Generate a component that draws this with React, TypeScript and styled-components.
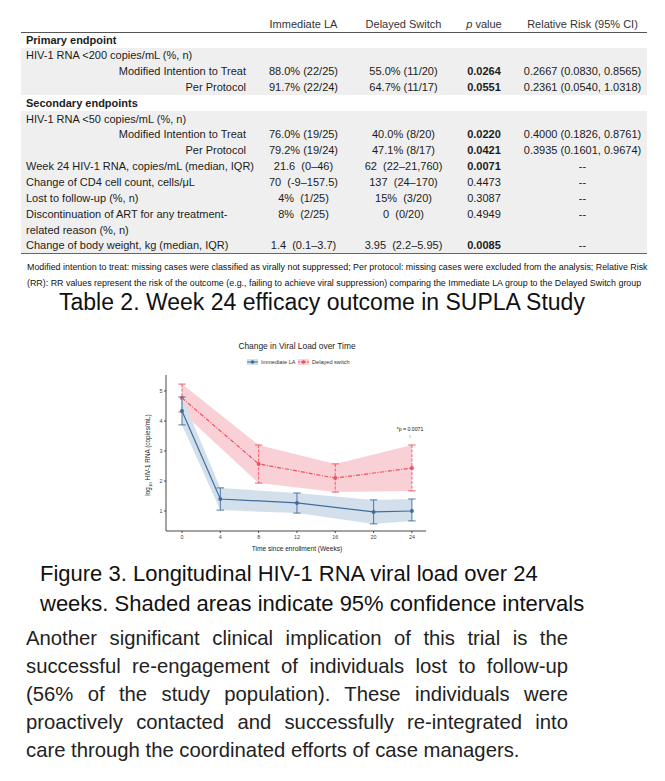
import React from 'react';
import styled, { createGlobalStyle } from 'styled-components';

const GlobalStyle = createGlobalStyle`
  body {
    margin: 0;
    background: #fff;
    font-family: "Liberation Sans", Arial, sans-serif;
    color: #1c1c1c;
  }
`;

const Page = styled.div`
  width: 665px;
`;

const TableWrap = styled.div`
  padding: 16px 0 0 21px;
`;

const Table = styled.table`
  border-collapse: collapse;
  table-layout: fixed;
  width: 626px;
  font-size: 11px;
`;

const HeadRow = styled.tr`
  height: 16px;
  border-bottom: 1px solid #555;
`;

const HeadCell = styled.th`
  font-weight: 400;
  color: #333;
  padding: 0;
  line-height: 14px;
  text-align: center;
`;

const Row = styled.tr<{ $shaded?: boolean; $last?: boolean }>`
  height: 15.85px;
  background: ${(p) => (p.$shaded ? '#efefef' : '#fff')};
  border-bottom: ${(p) => (p.$last ? '1px solid #666' : 'none')};
`;

const Cell = styled.td<{ $align?: string; $bold?: boolean; $sub?: boolean }>`
  padding: 0 ${(p) => (p.$sub ? '4px' : '0')} 0 ${(p) => (p.$align === 'left' ? '5px' : '0')};
  line-height: 15px;
  white-space: pre;
  text-align: ${(p) => p.$align || 'center'};
  font-weight: ${(p) => (p.$bold ? 700 : 400)};
`;

const Footnote = styled.p`
  margin: 5px 0 0;
  padding-left: 27px;
  font-size: 8.9px;
  line-height: 16px;
  color: #111;
  white-space: nowrap;
`;

const TableCaption = styled.h2`
  margin: 0;
  padding-left: 59px;
  font-size: 23px;
  font-weight: 400;
  line-height: 22px;
  color: #111;
`;

const Chart = styled.svg`
  display: block;
  margin: 20px 0 0 140px;
  font-family: "Liberation Sans", Arial, sans-serif;
`;

const FigureCaption = styled.p`
  margin: 1px 0 0;
  padding-left: 40px;
  width: 550px;
  font-size: 22px;
  line-height: 30px;
  color: #111;
`;

const Paragraph = styled.p`
  margin: 5px 0 0;
  padding-left: 26px;
  width: 542px;
  font-size: 20.3px;
  line-height: 28px;
  text-align: justify;
  color: #222;
`;

type RowData = {
  label: string;
  section?: boolean;
  sub?: boolean;
  shaded?: boolean;
  a?: string;
  b?: string;
  p?: string;
  pBold?: boolean;
  rr?: string;
};

const rows: RowData[] = [
  { label: 'Primary endpoint', section: true },
  { label: 'HIV-1 RNA <200 copies/mL (%, n)', shaded: true },
  { label: 'Modified Intention to Treat', sub: true, shaded: true, a: '88.0% (22/25)', b: '55.0% (11/20)', p: '0.0264', pBold: true, rr: '0.2667 (0.0830, 0.8565)' },
  { label: 'Per Protocol', sub: true, shaded: true, a: '91.7% (22/24)', b: '64.7% (11/17)', p: '0.0551', pBold: true, rr: '0.2361 (0.0540, 1.0318)' },
  { label: 'Secondary endpoints', section: true },
  { label: 'HIV-1 RNA <50 copies/mL (%, n)', shaded: true },
  { label: 'Modified Intention to Treat', sub: true, shaded: true, a: '76.0% (19/25)', b: '40.0% (8/20)', p: '0.0220', pBold: true, rr: '0.4000 (0.1826, 0.8761)' },
  { label: 'Per Protocol', sub: true, shaded: true, a: '79.2% (19/24)', b: '47.1% (8/17)', p: '0.0421', pBold: true, rr: '0.3935 (0.1601, 0.9674)' },
  { label: 'Week 24 HIV-1 RNA, copies/mL (median, IQR)', shaded: true, a: '21.6  (0–46)', b: '62  (22–21,760)', p: '0.0071', pBold: true, rr: '--' },
  { label: 'Change of CD4 cell count, cells/μL', shaded: true, a: '70  (-9–157.5)', b: '137  (24–170)', p: '0.4473', rr: '--' },
  { label: 'Lost to follow-up (%, n)', shaded: true, a: '4%  (1/25)', b: '15%  (3/20)', p: '0.3087', rr: '--' },
  { label: 'Discontinuation of ART for any treatment-', shaded: true, a: '8%  (2/25)', b: '0  (0/20)', p: '0.4949', rr: '--' },
  { label: 'related reason (%, n)', shaded: true },
  { label: 'Change of body weight, kg (median, IQR)', shaded: true, a: '1.4  (0.1–3.7)', b: '3.95  (2.2–5.95)', p: '0.0085', pBold: true, rr: '--' },
];

// chart coordinates: week -> x, log10 value -> y
const X = (t: number) => 42 + t * 9.58;
const Y = (v: number) => 208 - 30 * v;

const BLUE = '#3d6d9c';
const RED = '#ef4f5e';

const immediate = [
  [0, 4.33, 3.87, 4.8],
  [4, 1.4, 1.03, 1.77],
  [12, 1.27, 0.93, 1.6],
  [20, 0.97, 0.57, 1.37],
  [24, 1.0, 0.67, 1.4],
];
const delayed = [
  [0, 4.77, 4.3, 5.23],
  [8, 2.57, 1.93, 3.2],
  [16, 2.1, 1.63, 2.57],
  [24, 2.43, 1.67, 3.2],
];

const ribbon = (d: number[][]) =>
  [...d.map(([t, , , hi]) => `${X(t)},${Y(hi)}`), ...[...d].reverse().map(([t, , lo]) => `${X(t)},${Y(lo)}`)].join(' ');

const line = (d: number[][]) => d.map(([t, v]) => `${X(t)},${Y(v)}`).join(' ');

const Series = ({ data, color, fill, dash }: { data: number[][]; color: string; fill: string; dash?: string }) => (
  <g>
    <polygon points={ribbon(data)} fill={fill} />
    <polyline points={line(data)} fill="none" stroke={color} strokeWidth={1.2} strokeDasharray={dash} />
    {data.map(([t, v, lo, hi]) => (
      <g key={t} stroke={color} strokeWidth={0.9} strokeDasharray={dash ? '3 1.5' : undefined}>
        <line x1={X(t)} x2={X(t)} y1={Y(hi)} y2={Y(lo)} />
        <line x1={X(t) - 3.7} x2={X(t) + 3.7} y1={Y(hi)} y2={Y(hi)} strokeDasharray="none" />
        <line x1={X(t) - 3.7} x2={X(t) + 3.7} y1={Y(lo)} y2={Y(lo)} strokeDasharray="none" />
        <circle cx={X(t)} cy={Y(v)} r={2} fill={color} stroke="none" />
      </g>
    ))}
  </g>
);

const ViralLoadChart = () => (
  <Chart width={305} height={225} viewBox="0 0 305 225">
    <text x={157} y={16} fontSize={8.4} textAnchor="middle" fill="#222">Change in Viral Load over Time</text>

    <g fontSize={5.6} fill="#333">
      <rect x={107} y={26} width={11} height={6} fill="#d3e0eb" />
      <line x1={107} x2={118} y1={29} y2={29} stroke={BLUE} strokeWidth={1} />
      <circle cx={112.5} cy={29} r={1.8} fill={BLUE} />
      <text x={121} y={31}>Immediate LA</text>
      <rect x={158} y={26} width={11} height={6} fill="#f9d3d8" />
      <line x1={158} x2={169} y1={29} y2={29} stroke={RED} strokeWidth={1} strokeDasharray="2 1" />
      <circle cx={163.5} cy={29} r={1.8} fill={RED} />
      <text x={172} y={31}>Delayed switch</text>
    </g>

    <Series data={delayed} color={RED} fill="#f9d0d6" dash="4 1.5 1 1.5" />
    <Series data={immediate} color={BLUE} fill="#d3e0eb" />

    <g stroke="#333" strokeWidth={0.9}>
      <line x1={26} x2={26} y1={42} y2={198} />
      <line x1={26} x2={286} y1={198} y2={198} />
      {[1, 2, 3, 4, 5].map((v) => (
        <line key={v} x1={24} x2={26} y1={Y(v)} y2={Y(v)} />
      ))}
      {[0, 4, 8, 12, 16, 20, 24].map((t) => (
        <line key={t} x1={X(t)} x2={X(t)} y1={198} y2={200} />
      ))}
    </g>

    <g fontSize={5.4} fill="#444">
      {[1, 2, 3, 4, 5].map((v) => (
        <text key={v} x={22.5} y={Y(v) + 2} textAnchor="end">{v}</text>
      ))}
      {[0, 4, 8, 12, 16, 20, 24].map((t) => (
        <text key={t} x={X(t)} y={206} textAnchor="middle">{t}</text>
      ))}
    </g>

    <text x={157} y={218} fontSize={6.6} textAnchor="middle" fill="#222">Time since enrollment (Weeks)</text>
    <text x={10} y={122} fontSize={6.4} textAnchor="middle" fill="#222" transform="rotate(-90 10 122)">
      log<tspan fontSize={4.4} dy={1.5}>10</tspan><tspan dy={-1.5}> HIV-1 RNA (copies/mL)</tspan>
    </text>

    <text x={270} y={98} fontSize={5.2} textAnchor="middle" fill="#111">*p = 0.0071</text>
    <line x1={270} x2={270} y1={102} y2={105} stroke="#999" strokeWidth={0.6} />
  </Chart>
);

const App = () => {
  return (
    <Page>
      <GlobalStyle />
      <TableWrap>
        <Table>
          <colgroup>
            <col style={{ width: 229 }} />
            <col style={{ width: 107 }} />
            <col style={{ width: 93 }} />
            <col style={{ width: 68 }} />
            <col style={{ width: 129 }} />
          </colgroup>
          <thead>
            <HeadRow>
              <HeadCell />
              <HeadCell>Immediate LA</HeadCell>
              <HeadCell>Delayed Switch</HeadCell>
              <HeadCell><i>p</i> value</HeadCell>
              <HeadCell>Relative Risk (95% CI)</HeadCell>
            </HeadRow>
          </thead>
          <tbody>
            {rows.map((r, i) => (
              <Row key={i} $shaded={r.shaded} $last={i === rows.length - 1}>
                <Cell $align={r.sub ? 'right' : 'left'} $sub={r.sub} $bold={r.section}>{r.label}</Cell>
                <Cell>{r.a}</Cell>
                <Cell>{r.b}</Cell>
                <Cell $bold={r.pBold}>{r.p}</Cell>
                <Cell>{r.rr}</Cell>
              </Row>
            ))}
          </tbody>
        </Table>
      </TableWrap>

      <Footnote>
        Modified intention to treat: missing cases were classified as virally not suppressed; Per protocol: missing cases were excluded from the analysis; Relative Risk
        <br />
        (RR): RR values represent the risk of the outcome (e.g., failing to achieve viral suppression) comparing the Immediate LA group to the Delayed Switch group
      </Footnote>

      <TableCaption>Table 2. Week 24 efficacy outcome in SUPLA Study</TableCaption>

      <ViralLoadChart />

      <FigureCaption>
        Figure 3. Longitudinal HIV-1 RNA viral load over 24 weeks. Shaded areas indicate 95% confidence intervals
      </FigureCaption>

      <Paragraph>
        Another significant clinical implication of this trial is the successful re-engagement of individuals lost to follow-up
        (56% of the study population). These individuals were proactively contacted and successfully re-integrated into
        care through the coordinated efforts of case managers.
      </Paragraph>
    </Page>
  );
};

export default App;
